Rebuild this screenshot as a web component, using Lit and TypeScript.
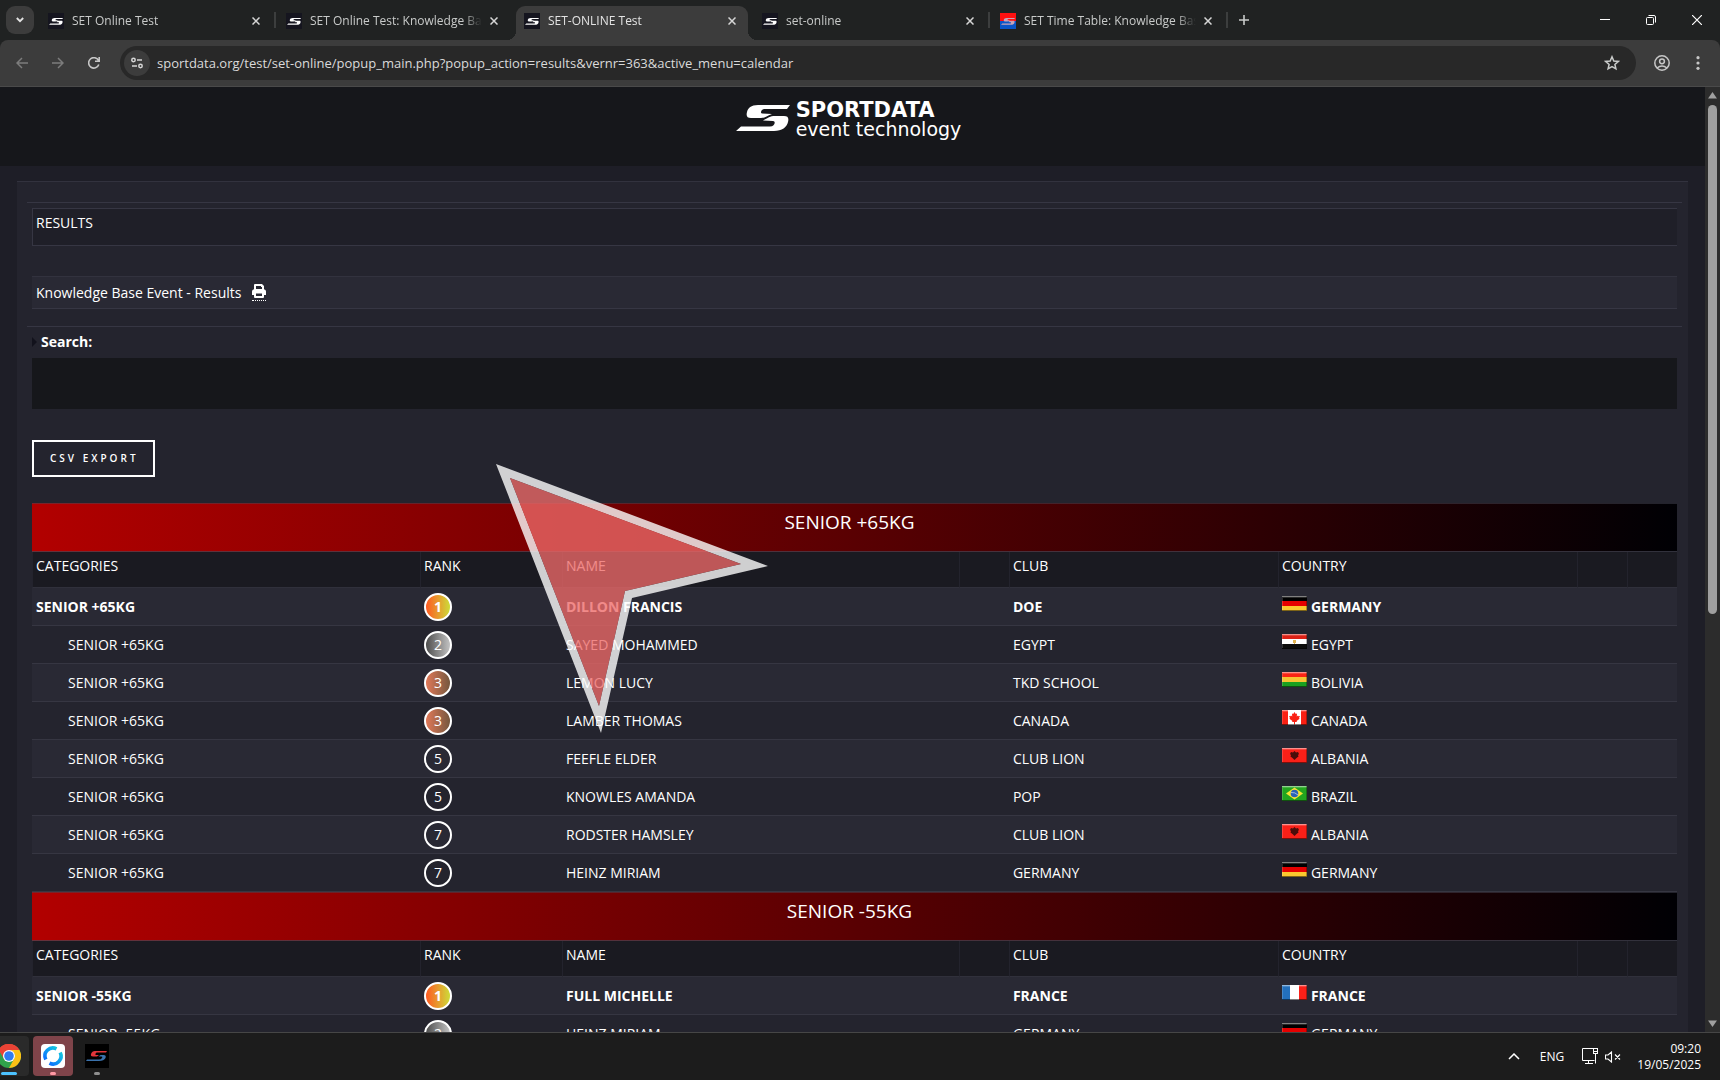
import { LitElement, html, css, svg, nothing } from "lit";
import { customElement, property } from "lit/decorators.js";
import { classMap } from "lit/directives/class-map.js";

type Row = { rank: number; name: string; club: string; country: string };
type Group = { title: string; rows: Row[] };
type Tab = { title: string; icon: "dark" | "split"; active?: boolean; line?: boolean };

const GROUPS: Group[] = [
  {
    title: "SENIOR +65KG",
    rows: [
      { rank: 1, name: "DILLON FRANCIS", club: "DOE", country: "GERMANY" },
      { rank: 2, name: "SAYED MOHAMMED", club: "EGYPT", country: "EGYPT" },
      { rank: 3, name: "LEMON LUCY", club: "TKD SCHOOL", country: "BOLIVIA" },
      { rank: 3, name: "LAMBER THOMAS", club: "CANADA", country: "CANADA" },
      { rank: 5, name: "FEEFLE ELDER", club: "CLUB LION", country: "ALBANIA" },
      { rank: 5, name: "KNOWLES AMANDA", club: "POP", country: "BRAZIL" },
      { rank: 7, name: "RODSTER HAMSLEY", club: "CLUB LION", country: "ALBANIA" },
      { rank: 7, name: "HEINZ MIRIAM", club: "GERMANY", country: "GERMANY" },
    ],
  },
  {
    title: "SENIOR -55KG",
    rows: [
      { rank: 1, name: "FULL MICHELLE", club: "FRANCE", country: "FRANCE" },
      { rank: 2, name: "HEINZ MIRIAM", club: "GERMANY", country: "GERMANY" },
    ],
  },
];

const TABS: Tab[] = [
  { title: "SET Online Test", icon: "dark", line: true },
  { title: "SET Online Test: Knowledge Base Event", icon: "dark" },
  { title: "SET-ONLINE Test", icon: "dark", active: true },
  { title: "set-online", icon: "dark", line: true },
  { title: "SET Time Table: Knowledge Base Event", icon: "split", line: true },
];

const S_TOP = "M54 0H22C15 0 12 3 11 7C10 11 11 13 15 13H25C29 13 31 11 36 9L26 8.5C24 8.500 25 4 29 4H51Z";
const S_LOW = "M0 26H38C46 26 51 22 52 17C53 13 52 11 48 11H39C34 11 32 13 27 15.500L37 16C40 16 39 21.500 34 21.500H5Z";

@customElement("set-flag")
class SetFlag extends LitElement {
  @property() country = "";
  static styles = css`
    :host { display: inline-block; width: 25px; height: 15px; }
    svg { display: block; }
  `;
  art() {
    switch (this.country) {
      case "GERMANY":
        return svg`<path fill="#000" d="M0 0h25v5H0z"/><path fill="#e60000" d="M0 5h25v5H0z"/><path fill="#fac82f" d="M0 10h25v5H0z"/>`;
      case "EGYPT":
        return svg`<path fill="#dd2015" d="M0 0h25v5H0z"/><path fill="#fff" d="M0 5h25v5H0z"/><path fill="#0c0c0c" d="M0 10h25v5H0z"/><path fill="#e3b552" d="M11 6h3v3h-1v1h-1v-1h-1z"/>`;
      case "BOLIVIA":
        return svg`<path fill="#fa2414" d="M0 0h25v5H0z"/><path fill="#f8c433" d="M0 5h25v5H0z"/><path fill="#1aa020" d="M0 10h25v5H0z"/>`;
      case "CANADA":
        return svg`<path fill="#fa2014" d="M0 0h25v15H0z"/><path fill="#fff" d="M6 0h13v15H6z"/><path fill="#fa2014" d="M12.500 2l1.300 2 1.200-.6-.2 3 1.200-1 .4.900 1.600-.2-1 2 .6.700-3 2.200.3 1H13v2.500h-1V12h-1.900l.3-1-3-2.200.6-.7-1-2 1.600.2.400-.9 1.200 1-.2-3 1.200.6z"/>`;
      case "ALBANIA":
        return svg`<path fill="#fa2018" d="M0 0h25v15H0z"/><path fill="#4b0d0a" d="M9 4l2 .6L12.500 3 14 4.600 16 4l1 2-1 1 .5 1.500L14.500 10l-2 2-2-2-2-1.500L9 7 8 6z"/>`;
      case "BRAZIL":
        return svg`<path fill="#23a51f" d="M0 0h25v15H0z"/><path fill="#f8e432" d="M12.500 1.500L21 7.500l-8.500 6-8.500-6z"/><circle cx="12.500" cy="7.500" r="3.800" fill="#2962b4"/><path d="M9 6.500q4-.5 7 2.500" stroke="#bcd0ea" stroke-width=".8" fill="none"/>`;
      default:
        return svg`<path fill="#2370bd" d="M0 0h8v15H0z"/><path fill="#fff" d="M8 0h9v15H8z"/><path fill="#fa2018" d="M17 0h8v15h-8z"/>`;
    }
  }
  render() {
    return html`<svg width="25" height="15" viewBox="0 0 25 15" aria-hidden="true">
      ${this.art()}
      <path d="M0 0h25v1H0z" fill="#fff" opacity=".5" />
      <path d="M0 1h25v1H0zM0 1h1v13H0z" fill="#fff" opacity=".16" />
      <path d="M0 14h25v1H0z" fill="#000" opacity=".5" />
      <path d="M24 0h1v14h-1z" fill="#000" opacity=".3" />
    </svg>`;
  }
}

@customElement("browser-bar")
class BrowserBar extends LitElement {
  static styles = css`
    :host { display: block; background: #202222; color: #c9cbca; font: 12px/16px "Open Sans", sans-serif; }
    svg { display: block; flex: none; }
    button { border: 0; padding: 0; margin: 0; background: none; color: inherit; display: grid; place-items: center; flex: none; }
    .strip { display: flex; align-items: center; height: 40px; padding-left: 6px; }
    .pick { width: 28px; height: 28px; border-radius: 9px; background: #3c3c3c; color: #e3e3e3; }
    .tabs { display: flex; flex: 0 1 1190px; align-self: stretch; min-width: 0; padding-left: 4px; }
    .tab { position: relative; display: flex; align-items: center; flex: 1 1 0; min-width: 0; margin: 6px 4px 0 2px; padding: 0 8px 4px 8px; gap: 8px; }
    .tab.line::after { content: ""; position: absolute; right: -4px; top: 6px; width: 2px; height: 16px; background: #3c3e3e; }
    .tab.active { background: #3c3c3c; border-radius: 9px 9px 0 0; color: #e3e3e3; }
    .tab.active::before, .tab.active::after { content: ""; position: absolute; bottom: 0; width: 9px; height: 9px; }
    .tab.active::before { left: -9px; background: radial-gradient(circle at 0 0, transparent 9px, #3c3c3c 9px); }
    .tab.active::after { right: -9px; background: radial-gradient(circle at 100% 0, transparent 9px, #3c3c3c 9px); }
    .title { flex: 1; min-width: 0; overflow: hidden; white-space: nowrap; color: inherit; text-decoration: none; mask-image: linear-gradient(90deg, #000 calc(100% - 20px), transparent); }
    .close { width: 16px; height: 16px; margin-left: -4px; color: #d6d6d6; }
    .plus { width: 28px; height: 28px; margin-left: 2px; }
    .win { display: flex; margin-left: auto; color: #fff; }
    .win button { width: 46px; height: 40px; }
    .tools { display: flex; align-items: center; height: 46px; background: #3c3c3c; border-bottom: 1px solid #4a4a4a; border-radius: 8px 8px 0 0; padding: 0 4px; }
    .nav { width: 36px; height: 34px; color: #c7c7c7; }
    .nav.off { color: #7c7c7c; }
    .omni { display: flex; align-items: center; flex: 1; min-width: 0; height: 34px; margin: 0 8px; padding: 0 12px 0 4px; border-radius: 17px; background: #282828; }
    .site { width: 26px; height: 26px; border-radius: 13px; background: #3c3c3c; margin-right: 7px; }
    .url { flex: 1; min-width: 0; border: 0; padding: 0; outline: 0; background: none; color: #dadada; font: 13px/20px "Open Sans", sans-serif; }
    .star { width: 24px; height: 24px; }
    .me { width: 36px; height: 34px; color: #c7c7c7; }
  `;
  tab(t: Tab) {
    const split = t.icon === "split";
    return html`<div class=${classMap({ tab: true, active: !!t.active, line: !!t.line })}>
      <svg width="16" height="16" viewBox="0 0 16 16" aria-hidden="true">
        <rect width="16" height="16" fill=${split ? "#ff1010" : "#15151f"} />
        ${split ? svg`<path d="M0 8h16v8H0z" fill="#0a55c8"/>` : nothing}
        <g transform="translate(1 5) scale(.26)" fill=${split ? "#c9a4b8" : "#fff"}>
          <path d=${S_TOP} /><path d=${S_LOW} />
        </g>
      </svg>
      <a class="title" href="#">${t.title}</a>
      <button class="close" aria-label="Close tab">
        <svg width="8" height="8" viewBox="0 0 8 8" stroke="currentColor" stroke-width="1.500"><path d="M.5.5l7 7M7.500.5l-7 7" /></svg>
      </button>
    </div>`;
  }
  render() {
    return html`
      <div class="strip">
        <button class="pick" aria-label="Search tabs">
          <svg width="8" height="6" viewBox="0 0 8 6" fill="none" stroke="currentColor" stroke-width="1.800"><path d="M.8 1l3.200 3.200L7.200 1" /></svg>
        </button>
        <div class="tabs">${TABS.map((t) => this.tab(t))}</div>
        <button class="plus" aria-label="New tab">
          <svg width="10" height="10" viewBox="0 0 10 10" stroke="currentColor" stroke-width="1.600"><path d="M5 0v10M0 5h10" /></svg>
        </button>
        <div class="win">
          <button aria-label="Minimise"><svg width="10" height="10" viewBox="0 0 10 10" stroke="currentColor"><path d="M0 4.500h10" /></svg></button>
          <button aria-label="Restore"><svg width="10" height="10" viewBox="0 0 10 10" fill="none" stroke="currentColor"><rect x=".5" y="2.500" width="7" height="7" rx="1" /><path d="M2.500.5H8q1.500 0 1.500 1.500v5.500" /></svg></button>
          <button aria-label="Close"><svg width="10" height="10" viewBox="0 0 10 10" stroke="currentColor" stroke-width="1.200"><path d="M0 0l10 10M10 0L0 10" /></svg></button>
        </div>
      </div>
      <div class="tools">
        <button class="nav off" aria-label="Back"><svg width="12" height="12" viewBox="0 0 12 12" fill="none" stroke="currentColor" stroke-width="1.500"><path d="M12 6H1M6 1L1 6l5 5" /></svg></button>
        <button class="nav off" aria-label="Forward"><svg width="12" height="12" viewBox="0 0 12 12" fill="none" stroke="currentColor" stroke-width="1.500"><path d="M0 6h11M6 1l5 5-5 5" /></svg></button>
        <button class="nav" aria-label="Reload"><svg width="12" height="12" viewBox="0 0 12 12" fill="none" stroke="currentColor" stroke-width="1.600"><path d="M10.800 7.500A5.200 5.200 0 1 1 10.500 3.500M11.200 0v4.200H7" /></svg></button>
        <div class="omni">
          <button class="site" aria-label="Site information">
            <svg width="12" height="12" viewBox="0 0 12 12" fill="none" stroke="#d6d6d6" stroke-width="1.500"><circle cx="2.500" cy="3" r="1.700" /><path d="M6 3h5M1 9h5" /><circle cx="9.500" cy="9" r="1.700" /></svg>
          </button>
          <input class="url" aria-label="Address" value="sportdata.org/test/set-online/popup_main.php?popup_action=results&vernr=363&active_menu=calendar" />
          <button class="star" aria-label="Bookmark"><svg width="16" height="16" viewBox="0 0 16 16" fill="none" stroke="currentColor" stroke-width="1.500"><path d="M8 1.800l1.800 4.200 4.500.4-3.400 3 1 4.400L8 11.500l-3.900 2.300 1-4.400-3.400-3 4.500-.4z" /></svg></button>
        </div>
        <button class="me" aria-label="Profile"><svg width="16" height="16" viewBox="0 0 16 16" fill="none" stroke="currentColor" stroke-width="1.500"><circle cx="8" cy="8" r="7.200" /><circle cx="8" cy="6.300" r="2.400" /><path d="M3 13q5-4 10 0" /></svg></button>
        <button class="me" aria-label="Menu"><svg width="4" height="14" viewBox="0 0 4 14" fill="currentColor"><circle cx="2" cy="1.700" r="1.600" /><circle cx="2" cy="7" r="1.600" /><circle cx="2" cy="12.300" r="1.600" /></svg></button>
      </div>
    `;
  }
}

@customElement("result-table")
class ResultTable extends LitElement {
  static styles = css`
    :host { display: block; }
    table { width: 100%; table-layout: fixed; border-collapse: separate; border-spacing: 0; color: #fff; font: 14px/20px "Open Sans", sans-serif; }
    .c-cat { width: 388px; } .c-rank { width: 142px; } .c-club { width: 269px; } .c-country { width: 299px; } .c-slim { width: 50px; }
    th, td { box-sizing: border-box; padding: 0 4px; text-align: left; font-weight: 400; white-space: nowrap; }
    .banner { height: 49px; background: linear-gradient(90deg, #b20000, #000004); border-top: 1px solid rgba(70, 70, 85, 0.5); border-bottom: 1px solid rgba(70, 70, 85, 0.7); text-align: center; font-size: 19px; line-height: 24px; vertical-align: top; padding: 6px 14px 0 4px; }
    .heads th { height: 36px; background: #1a1a21; border-left: 1px solid #23232d; border-bottom: 1px solid #30303b; vertical-align: top; padding-top: 4px; padding-left: 3px; }
    .row td { height: 38px; border-bottom: 1px solid #363642; }
    .row.odd td { background: #292934; }
    .row.first td { font-weight: 700; }
    .row .cat { padding-left: 36px; }
    .row.first .cat { padding-left: 4px; }
    .rank { display: grid; place-items: center; box-sizing: border-box; width: 28px; height: 28px; border: 2px solid #fff; border-radius: 14px; }
    .r1 { background: linear-gradient(90deg, #ff5a22, #cddc39); }
    .r2 { background: linear-gradient(90deg, #4e4e4e, #c2c2c2); }
    .r3 { background: linear-gradient(90deg, #e07858, #75583e); }
    .land { display: flex; align-items: center; gap: 4px; }
    set-flag { margin-bottom: 6px; }
  `;
  render() {
    return html`<table>
      <colgroup>
        <col class="c-cat" /><col class="c-rank" /><col /><col class="c-slim" /><col class="c-club" /><col class="c-country" /><col class="c-slim" /><col class="c-slim" />
      </colgroup>
      ${GROUPS.map(
        (g) => html`<tbody>
          <tr><th class="banner" colspan="8">${g.title}</th></tr>
          <tr class="heads">
            <th>CATEGORIES</th><th>RANK</th><th>NAME</th><th></th><th>CLUB</th><th>COUNTRY</th><th></th><th></th>
          </tr>
          ${g.rows.map(
            (r, i) => html`<tr class=${classMap({ row: true, odd: i % 2 === 0, first: i === 0 })}>
              <td class="cat">${g.title}</td>
              <td><span class="rank r${r.rank}">${r.rank}</span></td>
              <td>${r.name}</td>
              <td></td>
              <td>${r.club}</td>
              <td><span class="land"><set-flag country=${r.country}></set-flag>${r.country}</span></td>
              <td></td>
              <td></td>
            </tr>`
          )}
        </tbody>`
      )}
    </table>`;
  }
}

@customElement("task-bar")
class TaskBar extends LitElement {
  static styles = css`
    :host { display: flex; align-items: center; box-sizing: border-box; height: 48px; background: #1c1c1c; border-top: 1px solid #464646; color: #fff; font: 12px/16px "Open Sans", sans-serif; }
    svg { display: block; }
    .apps { display: flex; gap: 4px; padding-bottom: 1px; }
    .app { position: relative; display: grid; place-items: center; width: 40px; height: 40px; border: 0; padding: 0; border-radius: 4px; background: none; }
    .app::after { content: ""; position: absolute; bottom: 1px; left: 17px; width: 6px; height: 3px; border-radius: 2px; background: #8f8f8f; }
    .app.chrome { box-sizing: border-box; width: 29px; margin-left: 0; border-radius: 0 4px 4px 0; background: #2a2a2a; justify-items: start; overflow: hidden; }
    .app.chrome::after { left: 1px; width: 16px; background: #4cc2ff; }
    .app.alert { background: #7f444a; }
    .app.alert::after { background: #ff99a4; }
    .tray { display: flex; align-items: center; margin-left: auto; padding-right: 19px; }
    .clock { text-align: right; margin-left: 16px; }
    .up { border: 0; padding: 0; background: none; color: inherit; margin-right: 20px; }
    .eng { margin-right: 18px; }
    .net { margin-right: 6px; }
  `;
  render() {
    return html`
      <div class="apps">
        <button class="app chrome" aria-label="Chrome">
          <svg width="21" height="24" viewBox="3 0 21 24">
            <circle cx="12" cy="12" r="12" fill="#30a24b" />
            <path d="M1.600 6A12 12 0 0 1 22.400 6L12 12z" fill="#ea4335" /><path d="M1.600 6L7 15l5-9h10.400A12 12 0 0 0 1.600 6z" fill="#ea4335" />
            <path d="M22.400 6A12 12 0 0 1 12 24l5-9a6 6 0 0 0-5-9z" fill="#fbc116" />
            <circle cx="12" cy="12" r="6" fill="#fff" /><circle cx="12" cy="12" r="4.800" fill="#2f7cf2" />
          </svg>
        </button>
        <button class="app alert" aria-label="Remote desktop">
          <svg width="24" height="24" viewBox="0 0 24 24" fill="none">
            <defs><linearGradient id="blue" x1="1" y1="0" x2="0" y2="1"><stop offset="0" stop-color="#12c4e0" /><stop offset="1" stop-color="#0d72ff" /></linearGradient></defs>
            <rect width="24" height="24" rx="4" fill="#fff" />
            <path d="M4.800 15.500A8 8 0 0 1 15.500 4.800" stroke="url(#blue)" stroke-width="3.600" />
            <path d="M19.200 8.500A8 8 0 0 1 8.500 19.200" stroke="url(#blue)" stroke-width="3.600" />
          </svg>
        </button>
        <button class="app" aria-label="SET">
          <svg width="24" height="24" viewBox="0 0 24 24">
            <rect width="24" height="24" fill="#000" />
            <path d="M22 7H10q-3 0-4 3-.6 2.500 2 2.500h4l2-1.500h-3q-1 0-.5-1.200T12 8.500h9z" fill="#e0353a" />
            <path d="M1 17h13q5 0 6.500-3 1-3-2-3h-3l-2 1.500h3q1.500 0 .5 1.500t-3 1.500H2z" fill="#3a72ac" />
          </svg>
        </button>
      </div>
      <div class="tray">
        <button class="up" aria-label="Show hidden icons"><svg width="12" height="7" viewBox="0 0 12 7" fill="none" stroke="currentColor" stroke-width="1.500"><path d="M1 6l5-5 5 5" /></svg></button>
        <span class="eng">ENG</span>
        <svg class="net" width="17" height="17" viewBox="0 0 17 17" fill="none" stroke="currentColor"><path d="M11 .5H.5v12h12M6.500 12.500v3M3 15.500h8M13.500 6v9.500" /><rect x="11.500" y=".5" width="4" height="5" /><path d="M12 3.500h3" /></svg>
        <svg width="16" height="12" viewBox="0 0 16 12" fill="none" stroke="currentColor" stroke-width="1.100"><path d="M.5 4v4h2.500l3.500 3V1L3 4zM10 3.500l5 5M15 3.500l-5 5" /></svg>
        <div class="clock"><div>09:20</div><div>19/05/2025</div></div>
      </div>
    `;
  }
}

@customElement("app-root")
class AppRoot extends LitElement {
  static styles = css`
    :host { display: flex; flex-direction: column; height: 100vh; overflow: hidden; background: #1e1e27; color: #fff; font: 14px/20px "Open Sans", sans-serif; }
    browser-bar, task-bar { flex: none; }
    svg { display: block; }
    .view { display: flex; flex: 1; min-height: 0; }
    .page { position: relative; flex: 1; min-width: 0; overflow: hidden; }
    .top { display: flex; justify-content: center; box-sizing: border-box; height: 79px; padding: 14px 8px 0 0; background: #16171b; }
    .brand { display: flex; gap: 6px; color: #fff; text-decoration: none; font-family: "DejaVu Sans", sans-serif; }
    .mark { margin-top: 4px; }
    .words { display: grid; align-content: start; }
    .big { font-size: 21px; line-height: 18px; font-weight: 700; }
    .small { font-size: 19px; line-height: 20px; font-weight: 400; }
    .panel { margin: 15px 17px 0; padding: 20px 6px 0 10px; background: #24242e; border-top: 1px solid #32323e; min-height: 100%; }
    .block { border-top: 1px solid #363643; padding: 0 5px; }
    .results { margin: 5px 0 0; box-sizing: border-box; height: 38px; padding: 4px 3px; border: 1px solid #363643; border-right: 0; background: #1f1f28; font-size: 14px; font-weight: 400; line-height: 20px; }
    .event { display: flex; align-items: center; gap: 11px; box-sizing: border-box; height: 33px; margin: 30px 0 17px; padding: 0 4px; border-top: 1px solid #32323e; border-bottom: 1px solid #363643; background: #292934; }
    .print { border-bottom: 1px dotted #fff; padding-bottom: 2px; color: #fff; }
    .label { display: flex; align-items: center; gap: 4px; padding: 5px 0 6px; font-weight: 700; }
    .query { display: block; box-sizing: border-box; width: 100%; height: 51px; border: 0; padding: 0 12px; background: #16171b; color: #fff; font: inherit; }
    .export { display: block; margin: 31px 0 26px; height: 37px; padding: 0 14px 1px 16px; border: 2px solid #fff; background: none; color: #fff; font: 600 10px/16px "Open Sans", sans-serif; letter-spacing: 3px; }
    .pointer { position: absolute; left: 495px; top: 375px; }
    .bar { display: flex; flex-direction: column; align-items: center; flex: none; width: 15px; padding: 5px 0; box-sizing: border-box; background: #2c2c2c; gap: 6px; }
    .track { flex: 1; width: 9px; }
    .thumb { height: 56%; border-radius: 5px; background: #9f9f9f; }
  `;
  render() {
    return html`
      <browser-bar></browser-bar>
      <div class="view">
        <main class="page">
          <header class="top">
            <a class="brand" href="#">
              <svg class="mark" width="54" height="26" viewBox="0 0 54 26" fill="#fff" aria-hidden="true"><path d=${S_TOP} /><path d=${S_LOW} /></svg>
              <span class="words"><span class="big">SPORTDATA</span><span class="small">event technology</span></span>
            </a>
          </header>
          <section class="panel">
            <div class="block">
              <h1 class="results">RESULTS</h1>
              <div class="event">
                <span>Knowledge Base Event - Results</span>
                <a class="print" href="#" aria-label="Print">
                  <svg width="14" height="14" viewBox="0 0 14 14"><path fill="#fff" fill-rule="evenodd" d="M3 0h7l2 2v3.200q2 .3 2 2.300v3.500h-2v2q0 1-1 1H3q-1 0-1-1v-2H0V7.500q0-2 2-2.300V1q0-1 1-1zM4 2v3h6V3H9V2zM4 9.500V12h6V9.500z" /></svg>
                </a>
              </div>
            </div>
            <div class="block">
              <label class="label" for="query">
                <svg width="5" height="10" viewBox="0 0 5 10" aria-hidden="true"><path d="M0 0l5 5-5 5z" fill="#12121c" /></svg>Search:
              </label>
              <input class="query" id="query" type="text" />
              <button class="export">CSV EXPORT</button>
              <result-table></result-table>
            </div>
          </section>
          <svg class="pointer" width="275" height="272" viewBox="495 462 275 272" aria-hidden="true">
            <path fill="#fcfcfc" fill-opacity=".8" fill-rule="evenodd" d="M496 464L768 566L632 598L601 733ZM510 478L599 706L625 591L741 564Z" />
            <path fill="#ed6968" fill-opacity=".78" d="M510 478L599 706L625 591L741 564Z" />
          </svg>
        </main>
        <div class="bar" aria-hidden="true">
          <svg width="9" height="7" viewBox="0 0 9 7"><path d="M4.500 0L9 6.500H0z" fill="#9f9f9f" /></svg>
          <div class="track"><div class="thumb"></div></div>
          <svg width="9" height="7" viewBox="0 0 9 7"><path d="M4.500 7L9 .5H0z" fill="#9f9f9f" /></svg>
        </div>
      </div>
      <task-bar></task-bar>
    `;
  }
}
